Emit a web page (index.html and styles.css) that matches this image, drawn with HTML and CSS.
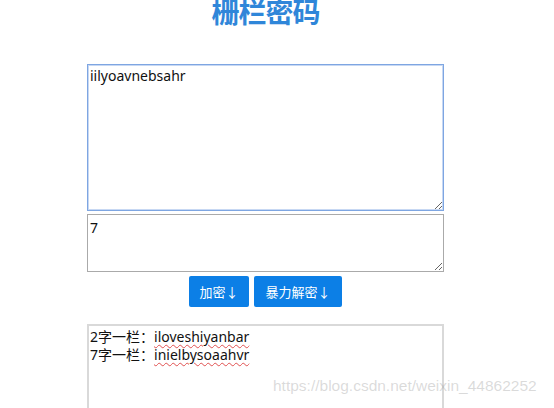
FILE: index.html
```html
<!DOCTYPE html>
<html>
<head>
<meta charset="utf-8">
<link rel="stylesheet" href="styles.css">
</head>
<body>
<div class="page">
  <h1 class="title">栅栏密码</h1>
  <div class="form">
    <textarea class="plain" spellcheck="false">iilyoavnebsahr</textarea>
    <textarea class="key" spellcheck="false">7</textarea>
    <div class="actions">
      <button class="btn btn-enc">加密↓</button>
      <button class="btn btn-brute">暴力解密↓</button>
    </div>
    <div class="result">
      <div class="line">2字一栏：<span class="sq">iloveshiyanbar</span></div>
      <div class="line">7字一栏：<span class="sq">inielbysoaahvr</span></div>
    </div>
  </div>
</div>
<div class="watermark">https://blog.csdn.net/weixin_44862252</div>
</body>
</html>
```
FILE: styles.css
```css
html, body {
  margin: 0;
  padding: 0;
  background: #fff;
  overflow: hidden;
}
body {
  width: 554px;
  height: 408px;
  position: relative;
  font-family: "Noto Sans", "Noto Sans CJK SC", sans-serif;
}
.page {
  padding-left: 87px;
  width: 357px;
}
.title {
  margin: -9px 0 0 0;
  height: 73px;
  text-align: center;
  font-family: "Noto Sans CJK SC", sans-serif;
  font-size: 28px;
  line-height: 40px;
  font-weight: 700;
  color: #2f86d9;
  letter-spacing: -1px;
}
.form {
  display: flex;
  flex-direction: column;
}
textarea {
  display: block;
  box-sizing: border-box;
  width: 357px;
  margin: 0;
  padding: 2px 2px;
  font-family: "Noto Sans", "Noto Sans CJK SC", sans-serif;
  font-size: 14px;
  line-height: 18px;
  color: #111;
  resize: vertical;
  outline: none;
}
.plain {
  height: 147px;
  border: 1px solid #7ea6e2;
  box-shadow: 0 0 0 1px #c7d8f3 inset;
}
.key {
  height: 58px;
  margin-top: 3px;
  border: 1px solid #aaa;
  padding-top: 4px;
}
.actions {
  display: flex;
  justify-content: center;
  gap: 5px;
  margin-top: 4px;
}
.btn {
  height: 31px;
  border: none;
  border-radius: 2px;
  background: #0c7fe6;
  color: #fff;
  font-family: "Noto Sans CJK SC", sans-serif;
  font-size: 13px;
  padding: 0;
}
.arrow {
  font-size: 12px;
}
.btn-enc { width: 60px; }
.btn-brute { width: 88px; }
.result {
  margin-top: 17px;
  box-sizing: border-box;
  height: 100px;
  border: 2px solid #d9d9d9;
  border-bottom: none;
  padding: 2px 0 0 1px;
  font-family: "Noto Sans", "Noto Sans CJK SC", sans-serif;
  font-size: 14px;
  line-height: 18px;
  color: #111;
}
.sq {
  text-decoration: underline wavy #e05050;
  text-decoration-thickness: 1px;
  text-underline-offset: 2px;
}
.watermark {
  position: absolute;
  left: 273px;
  top: 377px;
  font-family: "Liberation Sans", Arial, sans-serif;
  font-size: 15.5px;
  color: rgba(150,150,150,0.35);
  white-space: nowrap;
}
```
